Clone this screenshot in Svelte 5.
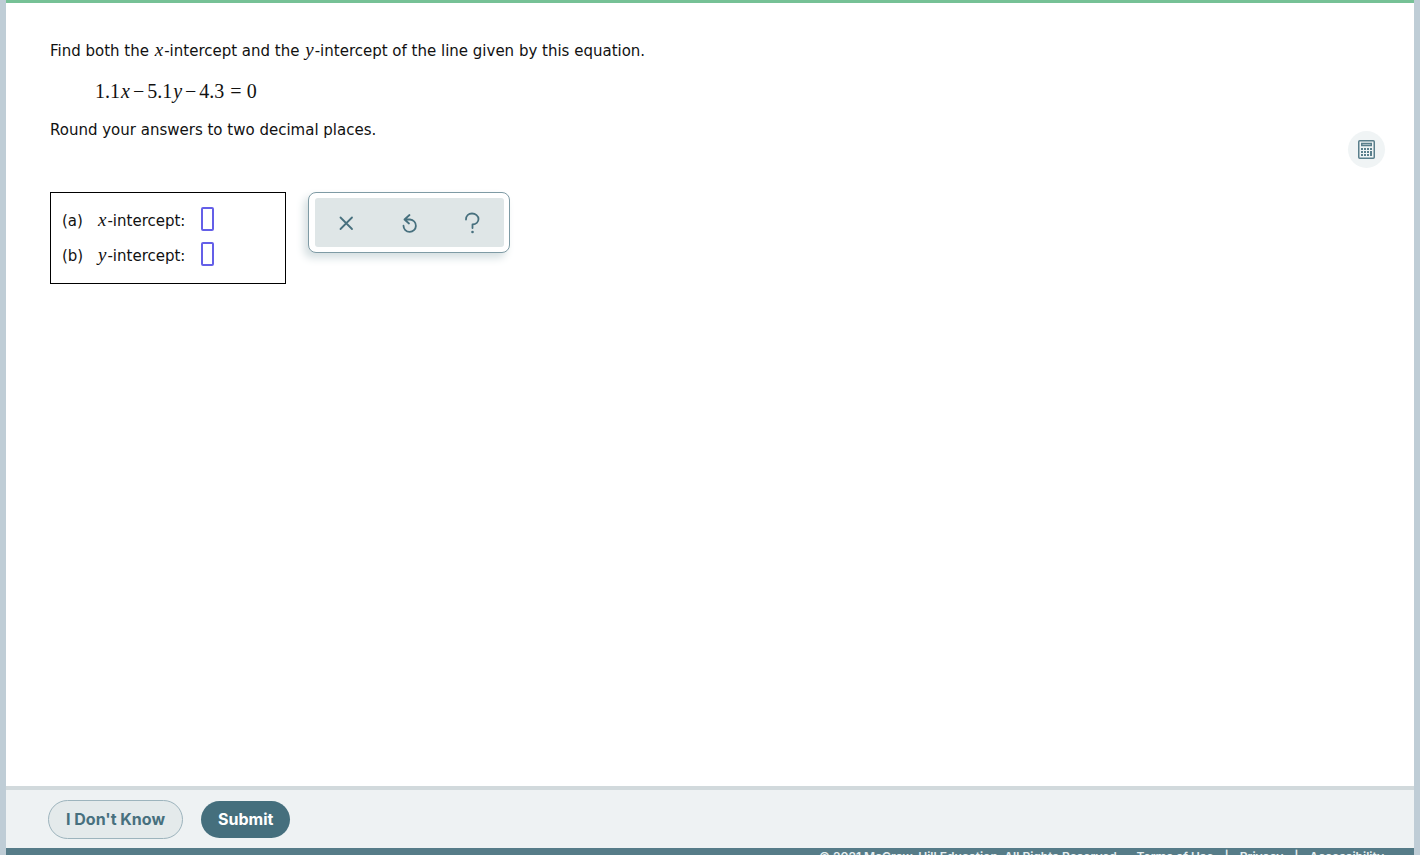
<script>
  let xAnswer = $state('');
  let yAnswer = $state('');

  function clearAnswers() {
    xAnswer = '';
    yAnswer = '';
  }
</script>

<div class="page">
  <main>
    <section class="question">
      <p>Find both the <i>x</i>-intercept and the <i>y</i>-intercept of the line given by this equation.</p>
      <p class="equation">
        <span>1.1<i>x</i></span><span>−</span><span>5.1<i>y</i></span><span>−</span><span>4.3</span><span class="equals">=</span><span>0</span>
      </p>
      <p>Round your answers to two decimal places.</p>

      <div class="work">
        <form class="answers">
          <div class="row">
            <span class="part">(a)</span>
            <label for="x-answer"><i>x</i>-intercept:</label>
            <input id="x-answer" type="text" bind:value={xAnswer} />
          </div>
          <div class="row">
            <span class="part">(b)</span>
            <label for="y-answer"><i>y</i>-intercept:</label>
            <input id="y-answer" type="text" bind:value={yAnswer} />
          </div>
        </form>

        <div class="palette">
          <div class="tools">
            <button type="button" aria-label="Clear" onclick={clearAnswers}>
              <svg width="24" height="24" viewBox="0 0 24 24"><path d="M5.500 6.500 17 18M17 6.500 5.500 18" /></svg>
            </button>
            <button type="button" aria-label="Undo" onclick={clearAnswers}>
              <svg width="24" height="24" viewBox="0 0 24 24"><path d="M11.500 4 6.500 8.500 11 12.500M6.500 8.500H12a6.200 6.200 0 1 1-6.500 6.200" /></svg>
            </button>
            <button type="button" aria-label="Help">
              <svg width="24" height="24" viewBox="0 0 24 24">
                <path d="M5 8.500C5 5 7.500 2.500 11 2.500S17.500 5 17.500 8s-2.500 5.200-6 5.500V17" />
                <circle cx="11.500" cy="21" r="1.300" />
              </svg>
            </button>
          </div>
        </div>
      </div>
    </section>

    <aside>
      <button class="calculator" type="button" aria-label="Calculator">
        <svg width="17" height="19" viewBox="0 0 17 19">
          <rect class="line" x="0.750" y="0.750" width="15.500" height="17.500" rx="1" />
          <rect class="line" x="3.750" y="3.500" width="9.500" height="2" />
          <path class="keys" d="M3 8h2v2h-2zM6 8h2v2h-2zM9 8h2v2h-2zM12 8h2v2h-2zM3 11h2v2h-2zM6 11h2v2h-2zM9 11h2v2h-2zM3 14h2v2h-2zM6 14h2v2h-2zM9 14h2v2h-2zM12 11h2v5h-2z" />
        </svg>
      </button>
    </aside>
  </main>

  <div class="actions">
    <button class="secondary" type="button">I Don't Know</button>
    <button class="primary" type="button">Submit</button>
  </div>

  <footer>
    <span class="copyright">© 2021 McGraw-Hill Education. All Rights Reserved.</span>
    <nav>
      <a href="#terms">Terms of Use</a>
      <span>|</span>
      <a href="#privacy">Privacy</a>
      <span>|</span>
      <a href="#accessibility">Accessibility</a>
    </nav>
  </footer>
</div>

<style>
  :global(body) {
    margin: 0;
  }

  .page {
    box-sizing: border-box;
    height: 100vh;
    overflow: hidden;
    display: flex;
    flex-direction: column;
    border: solid #bfcdd6;
    border-width: 0 6px;
    background: #fff;
    color: #111;
    font-family: Verdana, "DejaVu Sans", sans-serif;
    font-size: 15px;
    line-height: 20px;
  }

  main {
    flex: 1;
    min-height: 0;
    display: flex;
    justify-content: space-between;
    border-top: 3px solid #76c196;
    padding: 38px 29px 0 44px;
  }

  p {
    margin: 0;
  }

  i {
    margin: 0 1px;
    font-family: "Liberation Serif", serif;
    font-size: 19px;
    line-height: 16px;
  }

  .equation {
    display: flex;
    gap: 3px;
    margin: 20px 0 19px 45px;
    font-family: "Liberation Serif", serif;
    font-size: 20px;
  }

  .equation i {
    margin: 0 0 0 1px;
    font-size: 20px;
  }

  .equals {
    margin: 0 2px 0 3px;
  }

  .work {
    display: flex;
    align-items: flex-start;
    gap: 22px;
    margin-top: 52px;
  }

  .answers {
    box-sizing: border-box;
    width: 236px;
    display: grid;
    gap: 11px;
    padding: 14px 11px 17px;
    border: 1px solid #000;
  }

  .row {
    display: flex;
    align-items: flex-end;
  }

  .part {
    width: 35px;
  }

  label {
    width: 104px;
    white-space: nowrap;
  }

  input {
    box-sizing: border-box;
    width: 13px;
    height: 24px;
    padding: 0;
    border: 2px solid #645fe8;
    border-radius: 2px;
    background: #fff;
  }

  .palette {
    padding: 5px 5px 5px 6px;
    border: 1px solid #7f9ba5;
    border-radius: 8px;
    background: #fff;
    box-shadow: -4px 5px 8px #d5dfe1;
  }

  .tools {
    display: flex;
    border-radius: 3px;
    background: #dfe6e7;
  }

  button {
    display: flex;
    align-items: center;
    justify-content: center;
    padding: 0;
    border: 0;
    background: none;
    cursor: pointer;
  }

  .tools button {
    width: 63px;
    height: 49px;
  }

  .tools svg {
    fill: none;
    stroke: #47707e;
    stroke-width: 1.8;
    stroke-linecap: round;
    stroke-linejoin: round;
  }

  .tools circle {
    fill: #47707e;
    stroke: none;
  }

  .calculator {
    width: 37px;
    height: 37px;
    margin-top: 90px;
    border-radius: 50%;
    background: #f0f4f5;
  }

  .line {
    fill: none;
    stroke: #5a7f8c;
    stroke-width: 1.5;
  }

  .keys {
    fill: #5a7f8c;
  }

  .actions {
    display: flex;
    align-items: center;
    gap: 18px;
    padding: 10px 42px 9px;
    border-top: 4px solid #d1d9dc;
    background: #eef2f3;
  }

  .actions button {
    padding: 8px 17px 9px;
    border-radius: 20px;
    font: 700 16px/20px "Proxima Nova", Inter, sans-serif;
  }

  .actions .secondary {
    border: 1px solid #9db4bd;
    background: #e4eaeb;
    color: #47707e;
  }

  .actions .primary {
    background: #456f7d;
    color: #fff;
  }

  footer {
    box-sizing: border-box;
    height: 7px;
    flex: none;
    overflow: hidden;
    display: flex;
    justify-content: flex-end;
    gap: 16px;
    padding: 1px 30px 0;
    background: #567c88;
    color: #e6eff1;
    font: 600 12px/16px "Proxima Nova", Inter, sans-serif;
  }

  nav {
    display: flex;
    gap: 11px;
  }

  footer a {
    color: inherit;
    text-decoration: none;
  }
</style>
